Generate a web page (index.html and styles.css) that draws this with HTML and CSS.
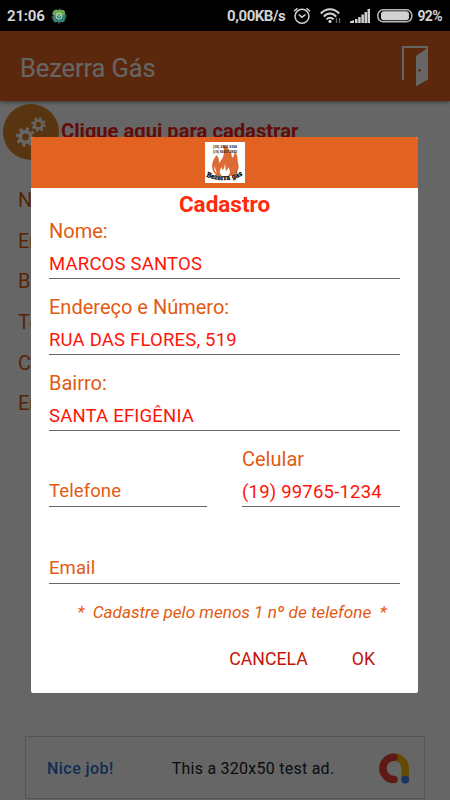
FILE: index.html
```html
<!DOCTYPE html>
<html lang="pt-BR">
<head>
  <meta charset="UTF-8">
  <meta name="viewport" content="width=device-width, initial-scale=1.0">
  <title>Bezerra Gás</title>
  <link rel="stylesheet" href="styles.css">
</head>
<body>
  <div class="phone">
    <header class="status">
      <span class="clock">21:06</span>
      <svg class="app-icon" width="16" height="16" viewBox="0 0 16 16">
        <circle cx="8" cy="8" r="6.8" fill="none" stroke="#444" stroke-width="1.6" stroke-dasharray="3 1.5"/>
        <rect x="2" y="2" width="12" height="12" rx="3" fill="#2f8378"/>
        <path d="M2 7V5a3 3 0 0 1 3-3h6a3 3 0 0 1 3 3v2z" fill="#6aa84f"/>
        <circle cx="8" cy="8" r="3" fill="none" stroke="#b9dcb5"/>
        <path d="M6 7l2 1.5L10 7" fill="none" stroke="#b9dcb5"/>
      </svg>
      <span class="speed">0,00KB/s</span>
      <svg class="alarm" width="18" height="18" viewBox="0 0 18 18" fill="none" stroke="#d2d2d2" stroke-width="1.5">
        <circle cx="9" cy="9.3" r="7"/>
        <path d="M5.8 7.5L9 10.2l3.5-2.7M1 4.2l3.5-3M17 4.2l-3.5-3"/>
      </svg>
      <svg class="wifi" width="21" height="16" viewBox="0 0 21 16" fill="none" stroke="#d2d2d2" stroke-width="2">
        <path d="M.8 5.5c5-5.8 13.4-5.8 18.4 0M3.8 8.6c3.6-4 9-4 12.400 0M6.500 11.400c2.200-2.300 5-2.300 7 0"/>
        <circle cx="10" cy="13.400" r="1.600" fill="#d2d2d2" stroke="none"/>
        <path d="M16.500 10v5M19.500 10v5" stroke="#666" stroke-width="1.300"/>
      </svg>
      <svg class="signal" width="20" height="14" viewBox="0 0 20 14" fill="#d2d2d2">
        <path d="M0 14v-1.500l4-1.500v3zM5 14v-4h2.500v4zM8.200 14V8h2.500v6zM11.400 14V5.500h2.500V14zM14.500 14V3h2.500v11zM17.500 14V0H20v14z"/>
      </svg>
      <svg class="battery" width="36" height="14" viewBox="0 0 36 14">
        <rect x=".8" y=".8" width="34" height="12" rx="5.500" fill="none" stroke="#bbb" stroke-width="1.500"/>
        <rect x="4" y="2.300" width="28" height="9" rx="3" fill="#d2d2d2"/>
      </svg>
      <span class="percent">92%</span>
    </header>

    <main class="screen">
      <div class="toolbar">
        <h1>Bezerra Gás</h1>
        <svg class="door" width="26" height="41" viewBox="0 0 26 41" fill="#fff">
          <path d="M0 0h26v34h-2V2H2v32H0z"/>
          <path fill-rule="evenodd" d="M14 10L25 2.500v31.500L14 40.500zM17.500 23a1.400 1.400 0 1 0 0 2.800 1.400 1.400 0 0 0 0-2.800z"/>
        </svg>
      </div>

      <div class="register">
        <svg class="gears" width="56" height="56" viewBox="0 0 56 56">
          <circle cx="28" cy="28" r="28" fill="#df8228"/>
          <g fill="none" stroke="#fff">
            <circle cx="22.500" cy="33" r="5.300" stroke-width="3.800"/>
            <circle cx="22.500" cy="33" r="8.200" stroke-width="3" stroke-dasharray="3 3.440"/>
            <circle cx="35.500" cy="20.500" r="4" stroke-width="2.600"/>
            <circle cx="35.500" cy="20.500" r="6.100" stroke-width="2.400" stroke-dasharray="2.300 2.490"/>
          </g>
        </svg>
        <span>Clique aqui para cadastrar</span>
      </div>

      <ul class="client">
        <li>N</li>
        <li>En</li>
        <li>B</li>
        <li>T<b>e</b></li>
        <li>C</li>
        <li>En</li>
      </ul>

      <div class="ad">
        <span class="ad-praise">Nice job!</span>
        <span class="ad-text">This a 320x50 test ad.</span>
        <svg width="31" height="31" viewBox="0 0 31 31" fill="none" stroke-width="7.500" stroke-linecap="round">
          <path d="M15 4.200a11 11 0 0 1 11.200 11.300V26" stroke="#fbbc04"/>
          <path d="M15 4.200a11 11 0 0 0 0 22.300" stroke="#ea4335"/>
          <circle cx="26.300" cy="26.500" r="3.900" fill="#4285f4"/>
        </svg>
      </div>
    </main>

    <div class="overlay"></div>

    <form class="dialog">
      <div class="dialog-header">
        <svg width="40" height="41" viewBox="0 0 40 41">
          <path fill="#fff" d="M0 0h40v41H0z"/>
          <path fill="#dc6b35" d="M18 3c7 4 9 8 9 13 2-2 3-4 2-7 5 5 3 8 4 12 2 6-1 11-7 13H13C7 31 6 24 8 19c1-3 3-4 3-6 3 2 3 5 3 8 5-5 6-11 4-18z"/>
          <path fill="#fff" d="M20 21c1 4 0 6 1 8 2-1 2-3 2-4 3 4 2 7 0 9h-6c-3-3-3-6 0-9 0 2 0 2 1 3 1-2 2-4 2-7zM10 24c0 3 1 5 2 7-3-2-3-4-2-7z"/>
          <g font-family="Liberation Sans, sans-serif" font-weight="bold" font-size="4.300" fill="#111">
            <text x="8" y="6.300" textLength="24" lengthAdjust="spacingAndGlyphs">(19) 3258-9168</text>
            <text x="8" y="10.500" textLength="24" lengthAdjust="spacingAndGlyphs">(19) 99317-2855</text>
          </g>
          <path id="arc" fill="none" d="M0 34Q20 43 40 32"/>
          <text font-family="DejaVu Serif, serif" font-weight="bold" font-size="7" fill="#000" stroke="#000" stroke-width=".3"><textPath href="#arc" startOffset="1" textLength="38" lengthAdjust="spacingAndGlyphs">Bezerra gás</textPath></text>
        </svg>
      </div>
      <h2>Cadastro</h2>

      <div class="fields">
        <div class="field">
          <label>Nome:</label>
          <div class="value">MARCOS SANTOS</div>
        </div>
        <div class="field">
          <label>Endereço e Número:</label>
          <div class="value">RUA DAS FLORES, 519</div>
        </div>
        <div class="field">
          <label>Bairro:</label>
          <div class="value">SANTA EFIGÊNIA</div>
        </div>
        <div class="field-row">
          <div class="field">
            <div class="value hint">Telefone</div>
          </div>
          <div class="field">
            <label>Celular</label>
            <div class="value">(19) 99765-1234</div>
          </div>
        </div>
        <div class="field">
          <div class="value hint">Email</div>
        </div>
      </div>

      <p class="note">*&nbsp; Cadastre pelo menos 1 nº de telefone &nbsp;*</p>

      <div class="actions">
        <button type="button">CANCELA</button>
        <button type="button">OK</button>
      </div>
    </form>
  </div>
</body>
</html>
```

FILE: styles.css
```css
* {
  box-sizing: border-box;
}
body {
  margin: 0;
  font-family: Roboto, sans-serif;
  background: #000;
}
.phone {
  position: relative;
  width: 450px;
  height: 800px;
  overflow: hidden;
}
.status {
  height: 31px;
  background: #000;
  color: #d2d2d2;
  display: flex;
  align-items: center;
  padding: 1px 8px 0 7px;
  font-size: 15px;
  font-weight: 700;
  letter-spacing: -0.2px;
}
.app-icon {
  margin-left: 6px;
}
.speed {
  margin-left: auto;
  letter-spacing: -0.45px;
}
.alarm {
  margin-left: 8px;
}
.wifi {
  margin-left: 9px;
}
.signal {
  margin-left: 9px;
}
.battery {
  margin-left: 7px;
}
.percent {
  margin-left: 4px;
  font-size: 14px;
  letter-spacing: -0.6px;
}
.screen {
  height: 769px;
  background: #fff;
}
.toolbar {
  height: 70px;
  display: flex;
  align-items: center;
  justify-content: space-between;
  padding: 0 22px 0 20px;
  background: #e46322;
  box-shadow: 0 1px 4px rgba(0, 0, 0, 0.5);
}
h1 {
  margin: 4px 0 0;
  font-size: 25.5px;
  font-weight: 400;
  letter-spacing: -0.1px;
  color: #fff;
}
.register {
  display: flex;
  align-items: center;
  gap: 2px;
  height: 62px;
  padding: 0 3px;
  color: #f81c10;
  font-size: 20.2px;
  font-weight: 700;
}
.register span {
  margin-bottom: 3px;
}
.client {
  list-style: none;
  margin: 0;
  padding: 17px 0 0 18px;
  color: #dc5a14;
  font-size: 20px;
}
.client li {
  height: 40.7px;
  line-height: 41px;
}
.client b {
  color: #f81c10;
}
.ad {
  display: flex;
  align-items: center;
  width: 400px;
  height: 63px;
  margin: 312px 0 0 25px;
  padding: 1px 14px 0 21px;
  border: 1px solid #c8d4d4;
  font-size: 16px;
  letter-spacing: 0.25px;
}
.ad-praise {
  color: #2a70d8;
  font-weight: 500;
  letter-spacing: 0.45px;
}
.ad-text {
  margin-left: 58px;
  color: #202124;
}
.ad svg {
  margin-left: auto;
}
.overlay {
  position: absolute;
  top: 31px;
  left: 0;
  right: 0;
  bottom: 0;
  background: rgba(0, 0, 0, 0.6);
}
.dialog {
  position: absolute;
  top: 137px;
  left: 31px;
  width: 387px;
  height: 556px;
  background: #fff;
  border-radius: 2px;
}
.dialog-header {
  height: 50.5px;
  background: #e26221;
  border-radius: 2px 2px 0 0;
  display: flex;
  align-items: center;
  justify-content: center;
}
h2 {
  margin: 0;
  height: 30px;
  line-height: 32px;
  text-align: center;
  color: #ff2a0a;
  font-size: 22.5px;
}
.fields {
  display: flex;
  flex-direction: column;
  gap: 15.3px;
  padding: 0 18px;
}
.field {
  display: flex;
  flex-direction: column;
  justify-content: flex-end;
  height: 61px;
  border-bottom: 1px solid #666;
}
.field-row {
  display: flex;
  gap: 35px;
}
.field-row .field {
  flex: 1;
}
label {
  height: 32px;
  line-height: 26px;
  font-size: 20px;
  color: #e35a12;
}
.value {
  height: 28px;
  line-height: 28px;
  font-size: 18.5px;
  letter-spacing: 0.2px;
  color: #ff1408;
}
.value.hint {
  height: 29px;
  color: #e35a12;
  letter-spacing: 0.1px;
}
.note {
  margin: 16px 0 0;
  padding-left: 15px;
  line-height: 24px;
  text-align: center;
  font-size: 17.2px;
  letter-spacing: -0.03px;
  font-style: italic;
  color: #e35a12;
}
.actions {
  display: flex;
  justify-content: flex-end;
  gap: 44px;
  margin-top: 23px;
  padding-right: 43px;
}
button {
  padding: 0;
  border: none;
  background: none;
  font-family: inherit;
  font-size: 17.7px;
  line-height: 24px;
  color: #c41208;
}
```
